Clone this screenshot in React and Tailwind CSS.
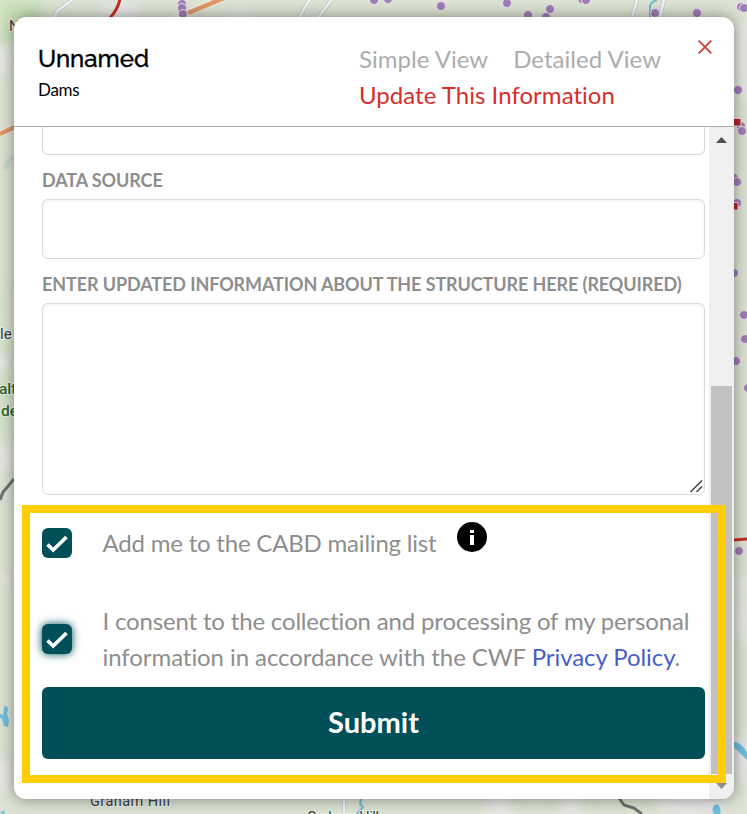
const dots = [
  [182, 4], [182, 8], [183, 14], [374, 0], [388, -1], [441, 6], [507, 3], [550, 9], [528, 15], [546, 17],
  [582, -1], [586, 0], [655, 13], [697, 13], [741, 7], [744, 8], [738, 90], [741, 126], [742, 131],
  [734, 178], [737, 182], [737, 203], [734, 273], [744, 315], [745, 339], [736, 361], [748, 388], [739, 551],
];

function MapBackground() {
  return (
    <svg className="absolute inset-0 h-full w-full" viewBox="0 0 747 814" aria-hidden="true">
      <defs>
        <filter id="soft" x="-30%" y="-30%" width="160%" height="160%">
          <feGaussianBlur stdDeviation="4" />
        </filter>
      </defs>
      <rect width="747" height="814" fill="#dee4d4" />
      <g filter="url(#soft)">
        <path d="M0 0H45L35 25L0 48Z" fill="#c9e1ba" />
        <path d="M0 280L8 300L4 320L14 350V420L0 440Z" fill="#d2e4c7" />
        <g fill="#e9e9ea">
          <ellipse cx="1" cy="60" rx="5" ry="16" />
          <ellipse cx="3" cy="362" rx="6" ry="8" />
          <ellipse cx="6" cy="458" rx="6" ry="12" />
          <ellipse cx="8" cy="577" rx="6" ry="4" />
          <ellipse cx="3" cy="776" rx="7" ry="15" />
          <ellipse cx="120" cy="10" rx="20" ry="7" />
          <ellipse cx="240" cy="15" rx="14" ry="4" />
          <ellipse cx="498" cy="808" rx="14" ry="9" />
          <ellipse cx="571" cy="807" rx="12" ry="9" />
          <ellipse cx="690" cy="805" rx="35" ry="10" />
          <ellipse cx="742" cy="760" rx="8" ry="25" />
          <ellipse cx="741" cy="585" rx="5" ry="8" />
          <ellipse cx="742" cy="620" rx="5" ry="22" />
          <ellipse cx="742" cy="60" rx="7" ry="40" />
        </g>
      </g>
      <path d="M5 169Q9 157 14 158" fill="none" stroke="#cddccf" strokeWidth="5" />
      <g fill="none" stroke="#c6cad1" strokeWidth="4">
        <path d="M54 18L57 11L75 -2M299 18L310 -1M318 18L332 -1M632 18L637 -1M660 18L664 -1M344 814V798" />
      </g>
      <g fill="none" stroke="#f4f5f7" strokeWidth="2.4">
        <path d="M54 18L57 11L75 -2M299 18L310 -1M318 18L332 -1M632 18L637 -1M660 18L664 -1M344 814V798" />
      </g>
      <path d="M174 18L188 12L222 -1M0 134L15 127" fill="none" stroke="#f2e8df" strokeWidth="7" />
      <path d="M188 13L224 -2M0 134L15 127" fill="none" stroke="#dc9a69" strokeWidth="4.5" />
      <path d="M110 18Q118 9 120 -1" fill="none" stroke="#c82a24" strokeWidth="3" />
      <path d="M733 540L747 539" fill="none" stroke="#c82f29" strokeWidth="3" />
      <path d="M0 500L3 492L9 485L14 479M619 798L624 805L634 808L642 814" fill="none" stroke="#6b7470" strokeWidth="3" />
      <path d="M650 18V7Q650 2 657 0M361 799L360 804L363 807L357 814" fill="none" stroke="#70b9d8" strokeWidth="2" />
      <g fill="#70bfdf">
        <path d="M4 707Q7 704 8 709L7 714L9 720L8 727L4 726L2 719L-1 717V713L3 715Z" />
        <path d="M734 742Q741 742 747 752V760L739 752L734 748Z" />
        <path d="M713 807Q717 801 720 808Q722 814 717 816Q711 813 713 807M0 813L4 810L5 814M373 814Q376 810 379 814" />
      </g>
      {dots.map(([x, y], i) => (
        <circle key={i} cx={x} cy={y} r="4.5" fill="#a17eb6" stroke="#ebe3f0" strokeWidth="1" />
      ))}
      <path d="M733 118.500H741V126H733ZM733 202.500H738V210H733Z" fill="#b9242b" stroke="#f1dddd" strokeWidth="1" />
      <g fill="#383b40" stroke="#edf0e8" strokeWidth="2" paintOrder="stroke" fontFamily="Roboto, sans-serif" fontSize="14.5" fontWeight="400">
        <text x="9" y="31">N</text>
        <text x="0" y="339" fontSize="15">le</text>
        <text x="90" y="806" textLength="80">Graham Hill</text>
        <text x="307" y="822" textLength="72">Graham Hill</text>
        <g fill="#2c692a" fontWeight="500" fontSize="15.5">
          <text x="-1" y="394">alt</text>
          <text x="1" y="416">de</text>
        </g>
      </g>
    </svg>
  );
}

function Checkbox({ focused = false }) {
  return (
    <span
      role="checkbox"
      aria-checked="true"
      className={`flex size-[30px] shrink-0 items-center justify-center rounded-[6px] bg-[#014f59] ${focused ? "shadow-[0_0_9px_#014f59]" : ""}`}
    >
      <svg viewBox="0 0 30 30" className="size-[30px]" fill="none" stroke="white" strokeWidth="3.7">
        <path d="M5.500 16.500L11.200 22L24.500 9" />
      </svg>
    </span>
  );
}

function Scrollbar() {
  return (
    <div className="flex w-[25px] shrink-0 flex-col items-center bg-[#f0f0f0]">
      <svg className="h-[259px] w-[25px] shrink-0" viewBox="0 0 25 259" fill="#505050">
        <path d="M7 16L12.5 10L18 16Z" />
      </svg>
      <div className="h-[388px] w-[21px] bg-[#c1c1c1]" />
      <svg className="h-[25px] w-[25px] shrink-0" viewBox="0 0 25 25" fill="#8e8e8e">
        <path d="M7 9L12.5 15L18 9Z" />
      </svg>
    </div>
  );
}

const field = "w-[663px] shrink-0 rounded-[6px] border border-[#dbdbdb] bg-white shadow-[inset_0_1px_3px_rgba(0,0,0,0.07)]";
const label = "text-[18px] font-bold leading-6 tracking-[-0.1px] whitespace-nowrap text-[#8e8e8e]";

export default function App() {
  return (
    <div className="relative h-[814px] w-[747px] overflow-hidden px-[14px] pt-[17px] font-['Lato',sans-serif]">
      <MapBackground />
      <main className="relative flex h-[782px] w-[720px] flex-col overflow-hidden rounded-[12px] bg-white">
        <header className="flex h-[110px] shrink-0 border-b border-[#acacac] pl-6">
          <div className="w-[321px] pt-[26px] text-black">
            <h1 className="font-['Raleway','Lato',sans-serif] text-[24px] leading-8 font-medium [-webkit-text-stroke:0.35px_black]">Unnamed</h1>
            <p className="mt-[3px] text-[17px] leading-6 tracking-[-0.3px]">Dams</p>
          </div>
          <nav className="w-[339px] pt-[24px] text-[24px] leading-9 tracking-[0.03px]">
            <div className="flex gap-[25px] whitespace-nowrap text-[#acacac]">
              <a>Simple View</a>
              <a>Detailed View</a>
            </div>
            <a className="text-[#d62f2b]">Update This Information</a>
          </nav>
          <button aria-label="Close" className="mt-[23px] flex size-[14px] items-center">
            <svg viewBox="0 0 14 14" className="size-[14px]" fill="none" stroke="#d23b34" strokeWidth="1.8">
              <path d="M0.7 0.7L13.3 13.3M13.3 0.7L0.7 13.3" />
            </svg>
          </button>
        </header>
        <div className="flex min-h-0 flex-1">
          <form className="flex w-[695px] flex-col overflow-hidden pl-7">
            <div className="h-7 w-[663px] shrink-0 rounded-b-[6px] border border-t-0 border-[#d8d8d8]" />
            <label className={`mt-[13px] ${label}`}>DATA SOURCE</label>
            <div className={`mt-[7px] h-[60px] ${field}`} />
            <label className={`mt-[13px] ${label}`}>ENTER UPDATED INFORMATION ABOUT THE STRUCTURE HERE (REQUIRED)</label>
            <div className={`mt-[7px] flex h-[192px] items-end justify-end p-[1px] ${field}`}>
              <svg className="h-[13px] w-[13px]" viewBox="0 0 13 13" fill="none" stroke="#444" strokeWidth="1.5">
                <path d="M0.5 12L12 0.5M6.500 12L12 6.500" />
              </svg>
            </div>
            <div className="mt-[33px] flex h-[30px] items-center text-[24px] tracking-[-0.2px] text-[#8e8e8e]">
              <Checkbox />
              <span className="ml-[30.5px] leading-9 whitespace-nowrap">Add me to the CABD mailing list</span>
              <svg className="mb-[13px] ml-[21px] size-[30px]" viewBox="0 0 30 30">
                <circle cx="15" cy="15" r="15" fill="black" />
                <path d="M13 8H17V11H13ZM13 13H17V23H13Z" fill="white" />
              </svg>
            </div>
            <div className="mt-[45px] flex h-[72px] items-center text-[24px] leading-9 tracking-[-0.17px] text-[#8e8e8e]">
              <Checkbox focused />
              <p className="ml-[30.5px] whitespace-nowrap">
                I consent to the collection and processing of my personal<br />
                <span className="tracking-[-0.07px]">
                  information in accordance with the CWF <a className="text-[#485fc7]">Privacy Policy</a>.
                </span>
              </p>
            </div>
            <button type="button" className="mt-[12px] h-[72px] w-[663px] shrink-0 rounded-[6px] bg-[#014f59] pb-[2px] text-[29px] font-bold text-white">Submit</button>
          </form>
          <Scrollbar />
        </div>
      </main>
      <div className="pointer-events-none absolute top-[17px] left-[14px] h-[782px] w-[720px] rounded-[12px] shadow-[0_0_16px_rgba(0,0,0,0.45)]" />
      <div className="pointer-events-none absolute top-[505px] left-[22px] h-[278px] w-[704px] border-8 border-[#ffce05]" />
    </div>
  );
}
